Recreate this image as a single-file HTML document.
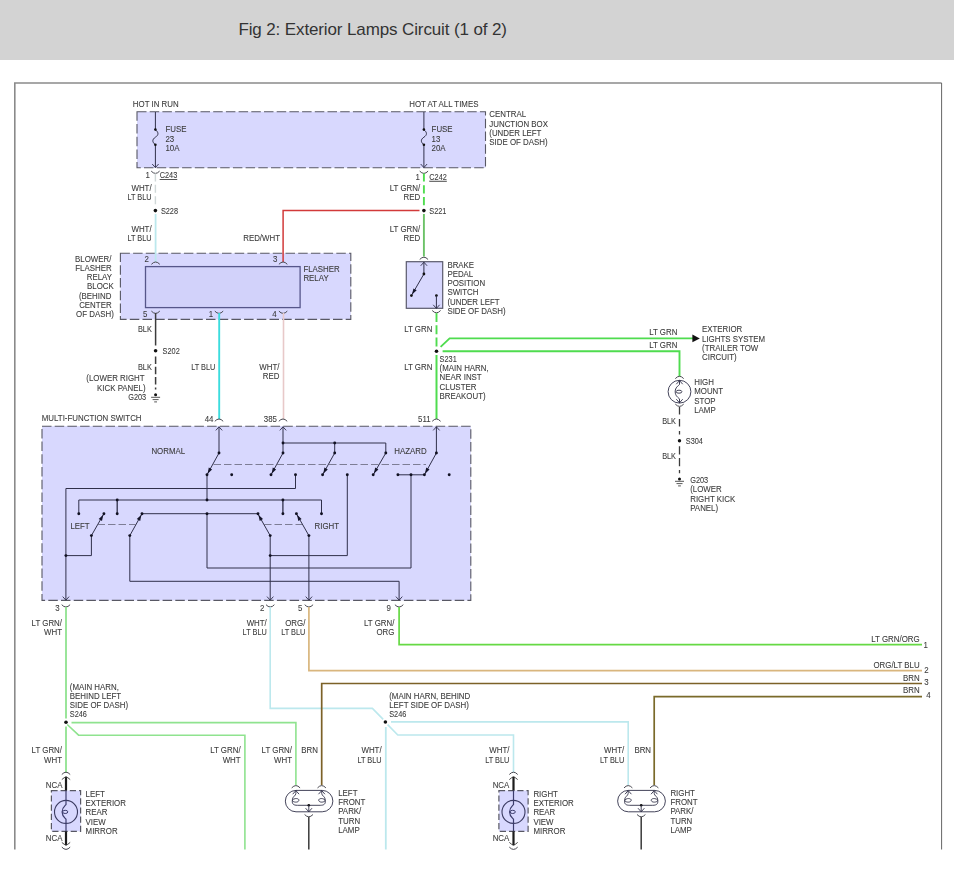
<!DOCTYPE html>
<html lang="en"><head><meta charset="utf-8"><title>Fig 2: Exterior Lamps Circuit (1 of 2)</title>
<style>
html,body{margin:0;padding:0;background:#fff;}
body{width:954px;height:870px;overflow:hidden;position:relative;font-family:"Liberation Sans",sans-serif;}
#hdr{position:absolute;left:0;top:0;width:954px;height:60px;background:#d3d3d3;}
#hdr h1{position:absolute;left:238.4px;top:20px;margin:0;font-weight:normal;font-size:17px;line-height:20px;color:#333;white-space:nowrap;letter-spacing:-0.12px;}
svg{position:absolute;left:0;top:0;will-change:transform;}
svg text{font-family:"Liberation Sans",sans-serif;font-size:8.4px;fill:#3a3a3a;stroke:#3a3a3a;stroke-width:0.08px;}
</style></head><body>
<div id="hdr"><h1>Fig 2: Exterior Lamps Circuit (1 of 2)</h1></div>
<svg width="954" height="870" viewBox="0 0 954 870">
<path d="M14.8 849.5 V83 H941.6" fill="none" stroke="#8a8a8a" stroke-width="1.6"/>
<path d="M941.6 83 V849.5" fill="none" stroke="#666" stroke-width="1"/>
<rect x="137" y="111.7" width="348.5" height="56.1" fill="#d8d8fe" stroke="#585864" stroke-width="1.1" stroke-dasharray="9.5 3.2"/>
<rect x="120.4" y="253.3" width="230.4" height="66.1" fill="#d8d8fe" stroke="#585864" stroke-width="1.1" stroke-dasharray="9.5 3.2"/>
<rect x="145.5" y="266.6" width="154.6" height="41" fill="#d2d2fa" stroke="#56568a" stroke-width="1.3"/>
<rect x="406.3" y="261.7" width="36.4" height="46.6" fill="#d8d8fe" stroke="#5a5a6c" stroke-width="1.2"/>
<rect x="42" y="426.2" width="428.8" height="174.2" fill="#d8d8fe" stroke="#585864" stroke-width="1.1" stroke-dasharray="9.5 3.2"/>
<rect x="51.4" y="790.6" width="29.2" height="40.7" fill="#d8d8fe" stroke="#585864" stroke-width="1.2" stroke-dasharray="6.2 3"/>
<rect x="498.9" y="790.6" width="29.2" height="40.7" fill="#d8d8fe" stroke="#585864" stroke-width="1.2" stroke-dasharray="6.2 3"/>
<path d="M155.4 112.0 L155.4 129.6" fill="none" stroke="#30304a" stroke-width="1.0" stroke-linejoin="miter"/>
<path d="M155.4 129.6 C158.8 132.5 158.8 135 155.4 137.2 C152.0 139.5 152.0 142 155.4 144.8" fill="none" stroke="#30304a" stroke-width="1"/>
<path d="M155.4 144.8 L155.4 167.5" fill="none" stroke="#30304a" stroke-width="1.0" stroke-linejoin="miter"/>
<circle cx="155.4" cy="129.6" r="1.3" fill="#111"/>
<circle cx="155.4" cy="144.8" r="1.3" fill="#111"/>
<path d="M152.2 164.0 L155.4 167.6 L158.6 164.0" fill="none" stroke="#30304a" stroke-width="0.9"/>
<path d="M151.2 171.1 Q155.4 175.7 159.6 171.1" fill="none" stroke="#484850" stroke-width="1"/>
<path d="M423.9 112.0 L423.9 129.6" fill="none" stroke="#30304a" stroke-width="1.0" stroke-linejoin="miter"/>
<path d="M423.9 129.6 C427.3 132.5 427.3 135 423.9 137.2 C420.5 139.5 420.5 142 423.9 144.8" fill="none" stroke="#30304a" stroke-width="1"/>
<path d="M423.9 144.8 L423.9 167.5" fill="none" stroke="#30304a" stroke-width="1.0" stroke-linejoin="miter"/>
<circle cx="423.9" cy="129.6" r="1.3" fill="#111"/>
<circle cx="423.9" cy="144.8" r="1.3" fill="#111"/>
<path d="M420.7 164.0 L423.9 167.6 L427.1 164.0" fill="none" stroke="#30304a" stroke-width="0.9"/>
<path d="M419.7 171.1 Q423.9 175.7 428.1 171.1" fill="none" stroke="#484850" stroke-width="1"/>
<text transform="translate(132.8 107.2) scale(0.94 1)">HOT IN RUN</text>
<text transform="translate(409.2 107.2) scale(0.94 1)">HOT AT ALL TIMES</text>
<text transform="translate(165.4 132.4) scale(0.94 1)">FUSE</text>
<text transform="translate(165.4 141.6) scale(0.94 1)">23</text>
<text transform="translate(165.4 151.3) scale(0.94 1)">10A</text>
<text transform="translate(431.6 132.2) scale(0.94 1)">FUSE</text>
<text transform="translate(431.6 141.6) scale(0.94 1)">13</text>
<text transform="translate(431.6 151.1) scale(0.94 1)">20A</text>
<text transform="translate(489.3 117.0) scale(0.94 1)">CENTRAL</text>
<text transform="translate(489.3 126.6) scale(0.94 1)">JUNCTION BOX</text>
<text transform="translate(489.3 136.0) scale(0.94 1)">(UNDER LEFT</text>
<text transform="translate(489.3 145.2) scale(0.94 1)">SIDE OF DASH)</text>
<text transform="translate(150.0 178.0) scale(0.94 1)" text-anchor="end">1</text>
<text transform="translate(159.7 178.0) scale(0.875 1)" text-decoration="underline">C243</text>
<text transform="translate(419.8 179.8) scale(0.94 1)" text-anchor="end">1</text>
<text transform="translate(429.3 179.8) scale(0.875 1)" text-decoration="underline">C242</text>
<path d="M155.4 173.4 L155.4 206.5" fill="none" stroke="#d0d8d8" stroke-width="1.4" stroke-dasharray="8 3.4" stroke-linejoin="miter"/>
<path d="M155.6 214.0 L155.6 262.0" fill="none" stroke="#bce8ed" stroke-width="1.8" stroke-linejoin="miter"/>
<circle cx="155.4" cy="210.6" r="1.8" fill="#111"/>
<text transform="translate(151.6 191.2) scale(0.94 1)" text-anchor="end">WHT/</text>
<text transform="translate(151.6 200.0) scale(0.875 1)" text-anchor="end">LT BLU</text>
<text transform="translate(151.6 232.2) scale(0.94 1)" text-anchor="end">WHT/</text>
<text transform="translate(151.6 241.2) scale(0.875 1)" text-anchor="end">LT BLU</text>
<text transform="translate(160.9 213.8) scale(0.875 1)">S228</text>
<path d="M423.9 173.4 L423.9 206.5" fill="none" stroke="#4fdc4f" stroke-width="1.9" stroke-dasharray="8.2 3.6" stroke-linejoin="miter"/>
<path d="M423.9 214.0 L423.9 256.5" fill="none" stroke="#6cc267" stroke-width="1.9" stroke-linejoin="miter"/>
<circle cx="423.9" cy="210.6" r="1.8" fill="#111"/>
<text transform="translate(420.2 191.2) scale(0.94 1)" text-anchor="end">LT GRN/</text>
<text transform="translate(420.2 200.0) scale(0.94 1)" text-anchor="end">RED</text>
<text transform="translate(420.2 232.2) scale(0.94 1)" text-anchor="end">LT GRN/</text>
<text transform="translate(420.2 241.2) scale(0.94 1)" text-anchor="end">RED</text>
<text transform="translate(429.3 213.8) scale(0.875 1)">S221</text>
<path d="M419.5 210.6 L283.1 210.6 L283.1 262.0" fill="none" stroke="#d23a3a" stroke-width="1.5" stroke-linejoin="miter"/>
<text transform="translate(243.2 241.2) scale(0.94 1)">RED/WHT</text>
<path d="M151.4 264.3 Q155.6 259.7 159.8 264.3" fill="none" stroke="#484850" stroke-width="1"/>
<path d="M278.9 264.3 Q283.1 259.7 287.3 264.3" fill="none" stroke="#484850" stroke-width="1"/>
<path d="M151.4 311.1 Q155.6 315.7 159.8 311.1" fill="none" stroke="#484850" stroke-width="1"/>
<path d="M214.8 311.1 Q219.0 315.7 223.2 311.1" fill="none" stroke="#484850" stroke-width="1"/>
<path d="M278.9 311.1 Q283.1 315.7 287.3 311.1" fill="none" stroke="#484850" stroke-width="1"/>
<text transform="translate(146.8 262.2) scale(0.94 1)" text-anchor="middle">2</text>
<text transform="translate(275.2 262.2) scale(0.94 1)" text-anchor="middle">3</text>
<text transform="translate(145.2 317.4) scale(0.94 1)" text-anchor="middle">5</text>
<text transform="translate(211.0 317.4) scale(0.94 1)" text-anchor="middle">1</text>
<text transform="translate(274.4 317.4) scale(0.94 1)" text-anchor="middle">4</text>
<text transform="translate(111.4 262.2) scale(0.94 1)" text-anchor="end">BLOWER/</text>
<text transform="translate(111.6 271.4) scale(0.94 1)" text-anchor="end">FLASHER</text>
<text transform="translate(112.0 280.4) scale(0.94 1)" text-anchor="end">RELAY</text>
<text transform="translate(113.8 288.8) scale(0.94 1)" text-anchor="end">BLOCK</text>
<text transform="translate(111.4 299.0) scale(0.94 1)" text-anchor="end">(BEHIND</text>
<text transform="translate(111.6 308.2) scale(0.94 1)" text-anchor="end">CENTER</text>
<text transform="translate(113.8 317.4) scale(0.94 1)" text-anchor="end">OF DASH)</text>
<text transform="translate(303.4 272.4) scale(0.94 1)">FLASHER</text>
<text transform="translate(303.4 281.4) scale(0.94 1)">RELAY</text>
<path d="M155.6 313.0 L155.6 345.5" fill="none" stroke="#3c3c3c" stroke-width="1.5" stroke-linejoin="miter"/>
<circle cx="155.6" cy="350.8" r="1.8" fill="#111"/>
<path d="M155.6 356.5 L155.6 389.5" fill="none" stroke="#3c3c3c" stroke-width="1.5" stroke-dasharray="7.5 2.8" stroke-linejoin="miter"/>
<path d="M151.1 397.3 H160.1 M152.6 399.6 H158.6 M154.2 401.9 H157.0" stroke="#444" stroke-width="0.9" fill="none"/>
<circle cx="155.6" cy="394.8" r="1.5" fill="#111"/>
<text transform="translate(151.8 332.2) scale(0.875 1)" text-anchor="end">BLK</text>
<text transform="translate(162.6 354.0) scale(0.875 1)">S202</text>
<text transform="translate(151.8 370.2) scale(0.875 1)" text-anchor="end">BLK</text>
<text transform="translate(144.6 381.0) scale(0.94 1)" text-anchor="end">(LOWER RIGHT</text>
<text transform="translate(145.6 390.8) scale(0.94 1)" text-anchor="end">KICK PANEL)</text>
<text transform="translate(146.2 400.4) scale(0.875 1)" text-anchor="end">G203</text>
<path d="M219.2 313.0 L219.2 419.0" fill="none" stroke="#3cdcde" stroke-width="1.9" stroke-linejoin="miter"/>
<text transform="translate(215.4 370.2) scale(0.875 1)" text-anchor="end">LT BLU</text>
<path d="M283.5 313.0 L283.5 419.0" fill="none" stroke="#e8c9c9" stroke-width="1.6" stroke-linejoin="miter"/>
<text transform="translate(279.4 370.2) scale(0.94 1)" text-anchor="end">WHT/</text>
<text transform="translate(279.4 379.2) scale(0.94 1)" text-anchor="end">RED</text>
<path d="M419.7 259.5 Q423.9 254.9 428.1 259.5" fill="none" stroke="#484850" stroke-width="1"/>
<path d="M420.7 265.8 L423.9 262.2 L427.1 265.8" fill="none" stroke="#30304a" stroke-width="0.9"/>
<path d="M423.9 262.2 L423.9 274.0" fill="none" stroke="#30304a" stroke-width="1.0" stroke-linejoin="miter"/>
<path d="M423.9 274.0 L411.4 295.6" fill="none" stroke="#30304a" stroke-width="1.0" stroke-linejoin="miter"/>
<polygon points="412.0,294.6 413.4,288.4 416.7,290.3" fill="#15152a"/>
<circle cx="423.9" cy="274.0" r="1.4" fill="#111"/>
<circle cx="411.4" cy="295.6" r="1.4" fill="#111"/>
<circle cx="436.4" cy="295.6" r="1.4" fill="#111"/>
<path d="M436.4 295.6 L436.4 308.2" fill="none" stroke="#30304a" stroke-width="1.0" stroke-linejoin="miter"/>
<path d="M433.2 304.8 L436.4 308.4 L439.6 304.8" fill="none" stroke="#30304a" stroke-width="0.9"/>
<path d="M432.2 310.5 Q436.4 315.1 440.6 310.5" fill="none" stroke="#484850" stroke-width="1"/>
<text transform="translate(447.4 267.6) scale(0.94 1)">BRAKE</text>
<text transform="translate(447.4 277.0) scale(0.94 1)">PEDAL</text>
<text transform="translate(447.4 286.2) scale(0.94 1)">POSITION</text>
<text transform="translate(447.4 295.3) scale(0.94 1)">SWITCH</text>
<text transform="translate(447.4 304.8) scale(0.94 1)">(UNDER LEFT</text>
<text transform="translate(447.4 314.0) scale(0.94 1)">SIDE OF DASH)</text>
<path d="M436.5 313.0 L436.5 346.5" fill="none" stroke="#4fdc4f" stroke-width="1.9" stroke-dasharray="9 3.2" stroke-linejoin="miter"/>
<circle cx="436.5" cy="351.2" r="1.8" fill="#111"/>
<path d="M436.5 355.0 L436.5 419.0" fill="none" stroke="#4fdc4f" stroke-width="2.0" stroke-linejoin="miter"/>
<text transform="translate(432.4 332.2) scale(0.94 1)" text-anchor="end">LT GRN</text>
<text transform="translate(432.4 370.2) scale(0.94 1)" text-anchor="end">LT GRN</text>
<text transform="translate(439.6 361.9) scale(0.875 1)">S231</text>
<text transform="translate(439.6 371.2) scale(0.94 1)">(MAIN HARN,</text>
<text transform="translate(439.6 380.4) scale(0.94 1)">NEAR INST</text>
<text transform="translate(439.6 390.0) scale(0.94 1)">CLUSTER</text>
<text transform="translate(439.6 399.2) scale(0.94 1)">BREAKOUT)</text>
<path d="M440.6 346.9 L449.6 338.4 L693.0 338.4" fill="none" stroke="#4fdc4f" stroke-width="1.9" stroke-linejoin="miter"/>
<polygon points="699.8,338.4 692.4,334.6 692.4,342.2" fill="#111"/>
<path d="M442.6 351.3 L679.5 351.3 L679.5 376.4" fill="none" stroke="#4fdc4f" stroke-width="1.9" stroke-linejoin="miter"/>
<text transform="translate(649.2 334.8) scale(0.94 1)">LT GRN</text>
<text transform="translate(649.2 348.1) scale(0.94 1)">LT GRN</text>
<text transform="translate(702.0 331.9) scale(0.94 1)">EXTERIOR</text>
<text transform="translate(702.0 341.6) scale(0.94 1)">LIGHTS SYSTEM</text>
<text transform="translate(702.0 351.0) scale(0.94 1)">(TRAILER TOW</text>
<text transform="translate(702.0 360.1) scale(0.94 1)">CIRCUIT)</text>
<path d="M675.3 378.6 Q679.5 374.0 683.7 378.6" fill="none" stroke="#484850" stroke-width="1"/>
<circle cx="679.5" cy="391.7" r="11.4" fill="none" stroke="#44445a" stroke-width="1"/>
<path d="M679.5 380.3 V384.5 C678.3 385.9 675.2 387.3 675.2 391.7 C675.2 396.1 678.3 397.5 679.5 398.9 V403.1" fill="none" stroke="#33334a" stroke-width="0.95"/>
<ellipse cx="679.0" cy="391.7" rx="2.9" ry="1.5" fill="none" stroke="#33334a" stroke-width="0.9"/>
<path d="M676.3 384.2 L679.5 380.6 L682.7 384.2" fill="none" stroke="#30304a" stroke-width="0.9"/>
<path d="M676.3 399.2 L679.5 402.8 L682.7 399.2" fill="none" stroke="#30304a" stroke-width="0.9"/>
<path d="M675.3 404.1 Q679.5 408.7 683.7 404.1" fill="none" stroke="#484850" stroke-width="1"/>
<path d="M679.5 406.9 L679.5 434.6" fill="none" stroke="#3c3c3c" stroke-width="1.3" stroke-dasharray="7.7 4.3" stroke-linejoin="miter"/>
<circle cx="679.5" cy="440.8" r="1.7" fill="#111"/>
<path d="M679.5 446.2 L679.5 473.2" fill="none" stroke="#3c3c3c" stroke-width="1.3" stroke-dasharray="8.2 3.7" stroke-linejoin="miter"/>
<circle cx="679.5" cy="478.9" r="1.5" fill="#111"/>
<path d="M675.0 481.3 H684.0 M676.5 483.6 H682.5 M678.1 485.9 H680.9" stroke="#444" stroke-width="0.9" fill="none"/>
<text transform="translate(694.2 385.2) scale(0.94 1)">HIGH</text>
<text transform="translate(694.2 394.4) scale(0.94 1)">MOUNT</text>
<text transform="translate(694.2 403.6) scale(0.94 1)">STOP</text>
<text transform="translate(694.2 413.0) scale(0.94 1)">LAMP</text>
<text transform="translate(676.0 424.0) scale(0.875 1)" text-anchor="end">BLK</text>
<text transform="translate(676.0 459.2) scale(0.875 1)" text-anchor="end">BLK</text>
<text transform="translate(685.8 444.3) scale(0.875 1)">S304</text>
<text transform="translate(690.2 483.0) scale(0.875 1)">G203</text>
<text transform="translate(690.2 492.4) scale(0.94 1)">(LOWER</text>
<text transform="translate(690.2 502.0) scale(0.94 1)">RIGHT KICK</text>
<text transform="translate(690.2 511.4) scale(0.94 1)">PANEL)</text>
<text transform="translate(41.8 421.4) scale(0.94 1)">MULTI-FUNCTION SWITCH</text>
<text transform="translate(213.5 422.2) scale(0.94 1)" text-anchor="end">44</text>
<text transform="translate(277.0 422.2) scale(0.94 1)" text-anchor="end">385</text>
<text transform="translate(430.6 422.2) scale(0.94 1)" text-anchor="end">511</text>
<text transform="translate(151.4 454.4) scale(0.94 1)">NORMAL</text>
<text transform="translate(394.2 454.4) scale(0.94 1)">HAZARD</text>
<text transform="translate(70.4 529.0) scale(0.94 1)">LEFT</text>
<text transform="translate(314.6 529.0) scale(0.94 1)">RIGHT</text>
<path d="M214.8 421.3 Q219.0 416.7 223.2 421.3" fill="none" stroke="#484850" stroke-width="1"/>
<path d="M215.8 430.4 L219.0 426.8 L222.2 430.4" fill="none" stroke="#30304a" stroke-width="0.9"/>
<path d="M278.8 421.3 Q283.0 416.7 287.2 421.3" fill="none" stroke="#484850" stroke-width="1"/>
<path d="M279.8 430.4 L283.0 426.8 L286.2 430.4" fill="none" stroke="#30304a" stroke-width="0.9"/>
<path d="M432.2 421.3 Q436.4 416.7 440.6 421.3" fill="none" stroke="#484850" stroke-width="1"/>
<path d="M433.2 430.4 L436.4 426.8 L439.6 430.4" fill="none" stroke="#30304a" stroke-width="0.9"/>
<path d="M219.0 426.8 L219.0 453.0" fill="none" stroke="#30304a" stroke-width="1.0" stroke-linejoin="miter"/>
<path d="M219.0 453.0 L207.0 474.8" fill="none" stroke="#30304a" stroke-width="1.0" stroke-linejoin="miter"/>
<polygon points="207.6,473.7 208.8,467.6 212.1,469.4" fill="#15152a"/>
<path d="M207.0 474.8 L207.0 500.0" fill="none" stroke="#30304a" stroke-width="1.0" stroke-linejoin="miter"/>
<path d="M283.0 426.8 L283.0 453.0" fill="none" stroke="#30304a" stroke-width="1.0" stroke-linejoin="miter"/>
<path d="M283.0 443.0 L385.8 443.0 L385.8 453.0" fill="none" stroke="#30304a" stroke-width="1.0" stroke-linejoin="miter"/>
<path d="M334.7 443.0 L334.7 453.0" fill="none" stroke="#30304a" stroke-width="1.0" stroke-linejoin="miter"/>
<path d="M283.0 453.0 L271.0 474.8" fill="none" stroke="#30304a" stroke-width="1.0" stroke-linejoin="miter"/>
<polygon points="271.6,473.7 272.8,467.6 276.1,469.4" fill="#15152a"/>
<path d="M334.7 453.0 L322.6 474.8" fill="none" stroke="#30304a" stroke-width="1.0" stroke-linejoin="miter"/>
<polygon points="323.2,473.8 324.4,467.6 327.8,469.4" fill="#15152a"/>
<path d="M385.8 453.0 L373.2 474.8" fill="none" stroke="#30304a" stroke-width="1.0" stroke-linejoin="miter"/>
<polygon points="373.8,473.8 375.2,467.6 378.4,469.5" fill="#15152a"/>
<path d="M436.4 426.8 L436.4 453.0" fill="none" stroke="#30304a" stroke-width="1.0" stroke-linejoin="miter"/>
<path d="M436.4 453.0 L424.4 474.8" fill="none" stroke="#30304a" stroke-width="1.0" stroke-linejoin="miter"/>
<polygon points="425.0,473.7 426.2,467.6 429.5,469.4" fill="#15152a"/>
<path d="M397.9 474.8 L424.4 474.8" fill="none" stroke="#30304a" stroke-width="1.0" stroke-linejoin="miter"/>
<path d="M411.0 474.8 L411.0 568.0 L207.0 568.0 L207.0 513.7" fill="none" stroke="#30304a" stroke-width="1.0" stroke-linejoin="miter"/>
<path d="M213.5 464.5 L426.0 464.5" fill="none" stroke="#66667a" stroke-width="0.8" stroke-dasharray="7.5 3" stroke-linejoin="miter"/>
<path d="M295.5 474.8 L295.5 488.5 L65.9 488.5 L65.9 600.0" fill="none" stroke="#30304a" stroke-width="1.0" stroke-linejoin="miter"/>
<path d="M78.8 513.7 L78.8 500.0 L321.5 500.0 L321.5 513.7" fill="none" stroke="#30304a" stroke-width="1.0" stroke-linejoin="miter"/>
<path d="M117.2 500.0 L117.2 513.7" fill="none" stroke="#30304a" stroke-width="1.3" stroke-linejoin="miter"/>
<path d="M282.9 500.0 L282.9 513.7" fill="none" stroke="#30304a" stroke-width="1.3" stroke-linejoin="miter"/>
<path d="M142.0 513.7 L258.0 513.7" fill="none" stroke="#30304a" stroke-width="1.0" stroke-linejoin="miter"/>
<path d="M91.4 535.6 L103.9 513.7" fill="none" stroke="#30304a" stroke-width="1.0" stroke-linejoin="miter"/>
<polygon points="103.3,514.7 102.0,520.9 98.7,519.0" fill="#15152a"/>
<path d="M91.4 535.6 L91.4 555.6 L65.9 555.6" fill="none" stroke="#30304a" stroke-width="1.0" stroke-linejoin="miter"/>
<path d="M129.8 535.6 L142.0 513.7" fill="none" stroke="#30304a" stroke-width="1.0" stroke-linejoin="miter"/>
<polygon points="141.4,514.7 140.2,520.9 136.8,519.1" fill="#15152a"/>
<path d="M129.8 535.6 L129.8 581.3 L399.1 581.3 L399.1 600.0" fill="none" stroke="#30304a" stroke-width="1.0" stroke-linejoin="miter"/>
<path d="M97.5 524.5 L136.0 524.5" fill="none" stroke="#66667a" stroke-width="0.8" stroke-dasharray="7.5 3" stroke-linejoin="miter"/>
<path d="M270.2 535.6 L257.8 513.7" fill="none" stroke="#30304a" stroke-width="1.0" stroke-linejoin="miter"/>
<polygon points="258.4,514.7 263.0,519.0 259.7,520.9" fill="#15152a"/>
<path d="M270.2 535.6 L270.2 600.0" fill="none" stroke="#30304a" stroke-width="1.0" stroke-linejoin="miter"/>
<path d="M308.9 535.6 L296.4 513.7" fill="none" stroke="#30304a" stroke-width="1.0" stroke-linejoin="miter"/>
<polygon points="297.0,514.7 301.6,519.0 298.3,520.9" fill="#15152a"/>
<path d="M308.9 535.6 L308.9 600.0" fill="none" stroke="#30304a" stroke-width="1.0" stroke-linejoin="miter"/>
<path d="M264.0 524.5 L302.0 524.5" fill="none" stroke="#66667a" stroke-width="0.8" stroke-dasharray="7.5 3" stroke-linejoin="miter"/>
<path d="M347.3 474.8 L347.3 555.6 L270.2 555.6" fill="none" stroke="#30304a" stroke-width="1.0" stroke-linejoin="miter"/>
<circle cx="219.0" cy="453.0" r="1.45" fill="#111122"/>
<circle cx="207.0" cy="474.8" r="1.45" fill="#111122"/>
<circle cx="231.7" cy="474.8" r="1.45" fill="#111122"/>
<circle cx="283.0" cy="443.0" r="1.45" fill="#111122"/>
<circle cx="334.7" cy="443.0" r="1.45" fill="#111122"/>
<circle cx="283.0" cy="453.0" r="1.45" fill="#111122"/>
<circle cx="334.7" cy="453.0" r="1.45" fill="#111122"/>
<circle cx="385.8" cy="453.0" r="1.45" fill="#111122"/>
<circle cx="271.0" cy="474.8" r="1.45" fill="#111122"/>
<circle cx="295.5" cy="474.8" r="1.45" fill="#111122"/>
<circle cx="322.6" cy="474.8" r="1.45" fill="#111122"/>
<circle cx="347.3" cy="474.8" r="1.45" fill="#111122"/>
<circle cx="373.2" cy="474.8" r="1.45" fill="#111122"/>
<circle cx="397.9" cy="474.8" r="1.45" fill="#111122"/>
<circle cx="411.0" cy="474.8" r="1.45" fill="#111122"/>
<circle cx="424.4" cy="474.8" r="1.45" fill="#111122"/>
<circle cx="449.2" cy="474.8" r="1.45" fill="#111122"/>
<circle cx="436.4" cy="453.0" r="1.45" fill="#111122"/>
<circle cx="207.0" cy="500.0" r="1.45" fill="#111122"/>
<circle cx="117.2" cy="500.0" r="1.45" fill="#111122"/>
<circle cx="282.9" cy="500.0" r="1.45" fill="#111122"/>
<circle cx="78.8" cy="513.7" r="1.45" fill="#111122"/>
<circle cx="103.9" cy="513.7" r="1.45" fill="#111122"/>
<circle cx="117.2" cy="513.7" r="1.45" fill="#111122"/>
<circle cx="142.0" cy="513.7" r="1.45" fill="#111122"/>
<circle cx="207.0" cy="513.7" r="1.45" fill="#111122"/>
<circle cx="258.0" cy="513.7" r="1.45" fill="#111122"/>
<circle cx="282.9" cy="513.7" r="1.45" fill="#111122"/>
<circle cx="296.4" cy="513.7" r="1.45" fill="#111122"/>
<circle cx="321.5" cy="513.7" r="1.45" fill="#111122"/>
<circle cx="91.4" cy="535.6" r="1.45" fill="#111122"/>
<circle cx="129.8" cy="535.6" r="1.45" fill="#111122"/>
<circle cx="270.2" cy="535.6" r="1.45" fill="#111122"/>
<circle cx="308.9" cy="535.6" r="1.45" fill="#111122"/>
<circle cx="65.9" cy="555.6" r="1.45" fill="#111122"/>
<circle cx="270.2" cy="555.6" r="1.45" fill="#111122"/>
<path d="M62.7 596.6 L65.9 600.2 L69.1 596.6" fill="none" stroke="#30304a" stroke-width="0.9"/>
<path d="M61.7 604.7 Q65.9 609.3 70.1 604.7" fill="none" stroke="#484850" stroke-width="1"/>
<path d="M267.0 596.6 L270.2 600.2 L273.4 596.6" fill="none" stroke="#30304a" stroke-width="0.9"/>
<path d="M266.0 604.7 Q270.2 609.3 274.4 604.7" fill="none" stroke="#484850" stroke-width="1"/>
<path d="M305.7 596.6 L308.9 600.2 L312.1 596.6" fill="none" stroke="#30304a" stroke-width="0.9"/>
<path d="M304.7 604.7 Q308.9 609.3 313.1 604.7" fill="none" stroke="#484850" stroke-width="1"/>
<path d="M395.9 596.6 L399.1 600.2 L402.3 596.6" fill="none" stroke="#30304a" stroke-width="0.9"/>
<path d="M394.9 604.7 Q399.1 609.3 403.3 604.7" fill="none" stroke="#484850" stroke-width="1"/>
<text transform="translate(57.4 611.2) scale(0.94 1)" text-anchor="middle">3</text>
<text transform="translate(262.2 611.2) scale(0.94 1)" text-anchor="middle">2</text>
<text transform="translate(300.2 611.2) scale(0.94 1)" text-anchor="middle">5</text>
<text transform="translate(388.8 611.2) scale(0.94 1)" text-anchor="middle">9</text>
<path d="M66.0 607.0 L66.0 718.5" fill="none" stroke="#8fe38f" stroke-width="1.8" stroke-linejoin="miter"/>
<circle cx="66.0" cy="722.3" r="1.8" fill="#111"/>
<path d="M66.0 726.5 L66.0 772.4" fill="none" stroke="#8fe38f" stroke-width="1.8" stroke-linejoin="miter"/>
<path d="M71.5 722.6 L295.9 722.6 L295.9 785.0" fill="none" stroke="#8fe38f" stroke-width="1.6" stroke-linejoin="miter"/>
<path d="M67.2 724.5 L78.6 735.2 L244.9 735.2 L244.9 849.5" fill="none" stroke="#8fe38f" stroke-width="1.6" stroke-linejoin="miter"/>
<text transform="translate(62.0 625.7) scale(0.94 1)" text-anchor="end">LT GRN/</text>
<text transform="translate(62.0 634.9) scale(0.94 1)" text-anchor="end">WHT</text>
<text transform="translate(62.0 753.0) scale(0.94 1)" text-anchor="end">LT GRN/</text>
<text transform="translate(62.0 762.8) scale(0.94 1)" text-anchor="end">WHT</text>
<text transform="translate(240.6 753.0) scale(0.94 1)" text-anchor="end">LT GRN/</text>
<text transform="translate(240.6 762.8) scale(0.94 1)" text-anchor="end">WHT</text>
<text transform="translate(292.0 753.0) scale(0.94 1)" text-anchor="end">LT GRN/</text>
<text transform="translate(292.0 762.8) scale(0.94 1)" text-anchor="end">WHT</text>
<text transform="translate(69.8 689.6) scale(0.94 1)">(MAIN HARN,</text>
<text transform="translate(69.8 699.0) scale(0.94 1)">BEHIND LEFT</text>
<text transform="translate(69.8 708.2) scale(0.94 1)">SIDE OF DASH)</text>
<text transform="translate(69.8 717.2) scale(0.875 1)">S246</text>
<path d="M270.2 607.0 L270.2 708.4 L372.4 708.4 L383.2 719.4" fill="none" stroke="#bce8ed" stroke-width="1.6" stroke-linejoin="miter"/>
<circle cx="385.4" cy="722.0" r="1.8" fill="#111"/>
<path d="M391.0 721.9 L628.2 721.9 L628.2 785.0" fill="none" stroke="#bce8ed" stroke-width="1.6" stroke-linejoin="miter"/>
<path d="M387.6 724.6 L397.8 735.0 L513.5 735.0 L513.5 772.4" fill="none" stroke="#bce8ed" stroke-width="1.6" stroke-linejoin="miter"/>
<path d="M385.8 727.0 L385.8 849.5" fill="none" stroke="#bce8ed" stroke-width="1.8" stroke-linejoin="miter"/>
<text transform="translate(266.8 625.7) scale(0.94 1)" text-anchor="end">WHT/</text>
<text transform="translate(266.8 634.9) scale(0.875 1)" text-anchor="end">LT BLU</text>
<text transform="translate(381.6 753.0) scale(0.94 1)" text-anchor="end">WHT/</text>
<text transform="translate(381.6 762.8) scale(0.875 1)" text-anchor="end">LT BLU</text>
<text transform="translate(509.4 753.0) scale(0.94 1)" text-anchor="end">WHT/</text>
<text transform="translate(509.4 762.8) scale(0.875 1)" text-anchor="end">LT BLU</text>
<text transform="translate(624.2 753.0) scale(0.94 1)" text-anchor="end">WHT/</text>
<text transform="translate(624.2 762.8) scale(0.875 1)" text-anchor="end">LT BLU</text>
<text transform="translate(389.2 699.0) scale(0.94 1)">(MAIN HARN, BEHIND</text>
<text transform="translate(389.2 708.4) scale(0.94 1)">LEFT SIDE OF DASH)</text>
<text transform="translate(389.2 717.2) scale(0.875 1)">S246</text>
<path d="M308.9 607.0 L308.9 670.6 L922.0 670.6" fill="none" stroke="#d9b67e" stroke-width="1.7" stroke-linejoin="miter"/>
<text transform="translate(305.4 625.7) scale(0.94 1)" text-anchor="end">ORG/</text>
<text transform="translate(305.4 634.9) scale(0.875 1)" text-anchor="end">LT BLU</text>
<path d="M399.1 607.0 L399.1 644.6 L922.0 644.6" fill="none" stroke="#66d944" stroke-width="1.7" stroke-linejoin="miter"/>
<text transform="translate(394.4 625.7) scale(0.94 1)" text-anchor="end">LT GRN/</text>
<text transform="translate(394.4 634.9) scale(0.94 1)" text-anchor="end">ORG</text>
<path d="M321.7 785.0 L321.7 683.5 L922.0 683.5" fill="none" stroke="#7c6228" stroke-width="1.7" stroke-linejoin="miter"/>
<path d="M654.2 785.0 L654.2 696.6 L922.0 696.6" fill="none" stroke="#7a6a2a" stroke-width="1.7" stroke-linejoin="miter"/>
<text transform="translate(301.2 753.0) scale(0.94 1)">BRN</text>
<text transform="translate(634.4 753.0) scale(0.94 1)">BRN</text>
<text transform="translate(919.6 641.8) scale(0.94 1)" text-anchor="end">LT GRN/ORG</text>
<text transform="translate(919.6 668.2) scale(0.94 1)" text-anchor="end">ORG/LT BLU</text>
<text transform="translate(919.6 680.6) scale(0.94 1)" text-anchor="end">BRN</text>
<text transform="translate(919.6 693.2) scale(0.94 1)" text-anchor="end">BRN</text>
<text transform="translate(923.4 647.6) scale(0.94 1)">1</text>
<text transform="translate(924.2 673.0) scale(0.94 1)">2</text>
<text transform="translate(924.2 685.0) scale(0.94 1)">3</text>
<text transform="translate(926.2 698.0) scale(0.94 1)">4</text>
<path d="M61.8 774.5 Q66.0 769.9 70.2 774.5" fill="none" stroke="#484850" stroke-width="1"/>
<path d="M66.0 776.8 L66.0 790.6" fill="none" stroke="#1c1c1c" stroke-width="2.2" stroke-linejoin="miter"/>
<path d="M66.0 831.3 L66.0 845.2" fill="none" stroke="#1c1c1c" stroke-width="2.2" stroke-linejoin="miter"/>
<path d="M61.8 779.6 Q64.5 777.2 66.0 776.8 Q67.5 777.2 70.2 779.6" fill="none" stroke="#333" stroke-width="0.9"/>
<path d="M61.8 842.4 Q64.5 844.8 66.0 845.2 Q67.5 844.8 70.2 842.4" fill="none" stroke="#333" stroke-width="0.9"/>
<circle cx="66.0" cy="811.9" r="11.5" fill="none" stroke="#3a3a60" stroke-width="1.1"/>
<path d="M66.0 790.6 V804.6 C64.8 806 62.1 807.6 62.1 811.9 C62.1 816.2 64.8 817.8 66.0 819.2 V831.3" fill="none" stroke="#3c3c6c" stroke-width="1.2"/>
<ellipse cx="65.2" cy="811.9" rx="2.6" ry="1.6" fill="none" stroke="#3c3c6c" stroke-width="1"/>
<path d="M61.8 847.1 Q66.0 851.7 70.2 847.1" fill="none" stroke="#484850" stroke-width="1"/>
<text transform="translate(62.4 787.8) scale(0.94 1)" text-anchor="end">NCA</text>
<text transform="translate(62.4 841.4) scale(0.94 1)" text-anchor="end">NCA</text>
<text transform="translate(85.6 797.0) scale(0.94 1)">LEFT</text>
<text transform="translate(85.6 806.2) scale(0.94 1)">EXTERIOR</text>
<text transform="translate(85.6 815.2) scale(0.94 1)">REAR</text>
<text transform="translate(85.6 825.0) scale(0.94 1)">VIEW</text>
<text transform="translate(85.6 834.0) scale(0.94 1)">MIRROR</text>
<path d="M509.3 774.5 Q513.5 769.9 517.7 774.5" fill="none" stroke="#484850" stroke-width="1"/>
<path d="M513.5 776.8 L513.5 790.6" fill="none" stroke="#1c1c1c" stroke-width="2.2" stroke-linejoin="miter"/>
<path d="M513.5 831.3 L513.5 845.2" fill="none" stroke="#1c1c1c" stroke-width="2.2" stroke-linejoin="miter"/>
<path d="M509.3 779.6 Q512.0 777.2 513.5 776.8 Q515.0 777.2 517.7 779.6" fill="none" stroke="#333" stroke-width="0.9"/>
<path d="M509.3 842.4 Q512.0 844.8 513.5 845.2 Q515.0 844.8 517.7 842.4" fill="none" stroke="#333" stroke-width="0.9"/>
<circle cx="513.5" cy="811.9" r="11.5" fill="none" stroke="#3a3a60" stroke-width="1.1"/>
<path d="M513.5 790.6 V804.6 C512.3 806 509.6 807.6 509.6 811.9 C509.6 816.2 512.3 817.8 513.5 819.2 V831.3" fill="none" stroke="#3c3c6c" stroke-width="1.2"/>
<ellipse cx="512.7" cy="811.9" rx="2.6" ry="1.6" fill="none" stroke="#3c3c6c" stroke-width="1"/>
<path d="M509.3 847.1 Q513.5 851.7 517.7 847.1" fill="none" stroke="#484850" stroke-width="1"/>
<text transform="translate(509.3 787.8) scale(0.94 1)" text-anchor="end">NCA</text>
<text transform="translate(509.3 841.4) scale(0.94 1)" text-anchor="end">NCA</text>
<text transform="translate(533.4 797.0) scale(0.94 1)">RIGHT</text>
<text transform="translate(533.4 806.2) scale(0.94 1)">EXTERIOR</text>
<text transform="translate(533.4 815.2) scale(0.94 1)">REAR</text>
<text transform="translate(533.4 825.0) scale(0.94 1)">VIEW</text>
<text transform="translate(533.4 834.0) scale(0.94 1)">MIRROR</text>
<path d="M296.0 790.4 H322.2 A10.7 10.7 0 0 1 322.2 811.8 H296.0 A10.7 10.7 0 0 1 296.0 790.4 Z" fill="none" stroke="#44445a" stroke-width="1"/>
<path d="M291.7 787.9 Q295.9 783.3 300.1 787.9" fill="none" stroke="#484850" stroke-width="1"/>
<path d="M317.5 787.9 Q321.7 783.3 325.9 787.9" fill="none" stroke="#484850" stroke-width="1"/>
<path d="M292.7 794.2 L295.9 790.6 L299.1 794.2" fill="none" stroke="#30304a" stroke-width="0.9"/>
<path d="M318.5 794.2 L321.7 790.6 L324.9 794.2" fill="none" stroke="#30304a" stroke-width="0.9"/>
<path d="M295.9 790.4 V793.4 C295.9 795.9 292.3 796.4 292.3 800.0 C292.3 802.6 298.9 803.0 298.9 800.2 C298.9 797.8 292.7 798.0 292.3 800.9 C292.1 803.9 293.4 805.3 297.4 805.3 H308.8" fill="none" stroke="#33334a" stroke-width="0.9"/>
<path d="M321.7 790.4 V793.4 C321.7 795.9 325.3 796.4 325.3 800.0 C325.3 802.6 318.7 803.0 318.7 800.2 C318.7 797.8 324.9 798.0 325.3 800.9 C325.5 803.9 324.2 805.3 320.2 805.3 H308.8" fill="none" stroke="#33334a" stroke-width="0.9"/>
<circle cx="308.8" cy="805.3" r="1.3" fill="#111"/>
<path d="M308.8 805.3 L308.8 811.8" fill="none" stroke="#30304a" stroke-width="0.9" stroke-linejoin="miter"/>
<path d="M305.6 808.2 L308.8 811.8 L312.0 808.2" fill="none" stroke="#30304a" stroke-width="0.9"/>
<path d="M304.6 814.5 Q308.8 819.1 313.0 814.5" fill="none" stroke="#484850" stroke-width="1"/>
<path d="M308.8 817.0 L308.8 849.5" fill="none" stroke="#3a3a3a" stroke-width="1.5" stroke-linejoin="miter"/>
<text transform="translate(338.2 796.2) scale(0.94 1)">LEFT</text>
<text transform="translate(338.2 805.4) scale(0.94 1)">FRONT</text>
<text transform="translate(338.2 814.4) scale(0.94 1)">PARK/</text>
<text transform="translate(338.2 824.4) scale(0.94 1)">TURN</text>
<text transform="translate(338.2 833.4) scale(0.94 1)">LAMP</text>
<path d="M628.3 790.4 H654.7 A10.7 10.7 0 0 1 654.7 811.8 H628.3 A10.7 10.7 0 0 1 628.3 790.4 Z" fill="none" stroke="#44445a" stroke-width="1"/>
<path d="M624.0 787.9 Q628.2 783.3 632.4 787.9" fill="none" stroke="#484850" stroke-width="1"/>
<path d="M650.0 787.9 Q654.2 783.3 658.4 787.9" fill="none" stroke="#484850" stroke-width="1"/>
<path d="M625.0 794.2 L628.2 790.6 L631.4 794.2" fill="none" stroke="#30304a" stroke-width="0.9"/>
<path d="M651.0 794.2 L654.2 790.6 L657.4 794.2" fill="none" stroke="#30304a" stroke-width="0.9"/>
<path d="M628.2 790.4 V793.4 C628.2 795.9 624.6 796.4 624.6 800.0 C624.6 802.6 631.2 803.0 631.2 800.2 C631.2 797.8 625.0 798.0 624.6 800.9 C624.4 803.9 625.7 805.3 629.7 805.3 H641.2" fill="none" stroke="#33334a" stroke-width="0.9"/>
<path d="M654.2 790.4 V793.4 C654.2 795.9 657.8 796.4 657.8 800.0 C657.8 802.6 651.2 803.0 651.2 800.2 C651.2 797.8 657.4 798.0 657.8 800.9 C658.0 803.9 656.7 805.3 652.7 805.3 H641.2" fill="none" stroke="#33334a" stroke-width="0.9"/>
<circle cx="641.2" cy="805.3" r="1.3" fill="#111"/>
<path d="M641.2 805.3 L641.2 811.8" fill="none" stroke="#30304a" stroke-width="0.9" stroke-linejoin="miter"/>
<path d="M638.0 808.2 L641.2 811.8 L644.4 808.2" fill="none" stroke="#30304a" stroke-width="0.9"/>
<path d="M637.0 814.5 Q641.2 819.1 645.4 814.5" fill="none" stroke="#484850" stroke-width="1"/>
<path d="M641.2 817.0 L641.2 849.5" fill="none" stroke="#3a3a3a" stroke-width="1.5" stroke-linejoin="miter"/>
<text transform="translate(670.4 796.2) scale(0.94 1)">RIGHT</text>
<text transform="translate(670.4 805.4) scale(0.94 1)">FRONT</text>
<text transform="translate(670.4 814.4) scale(0.94 1)">PARK/</text>
<text transform="translate(670.4 824.4) scale(0.94 1)">TURN</text>
<text transform="translate(670.4 833.4) scale(0.94 1)">LAMP</text>
</svg>
</body></html>
